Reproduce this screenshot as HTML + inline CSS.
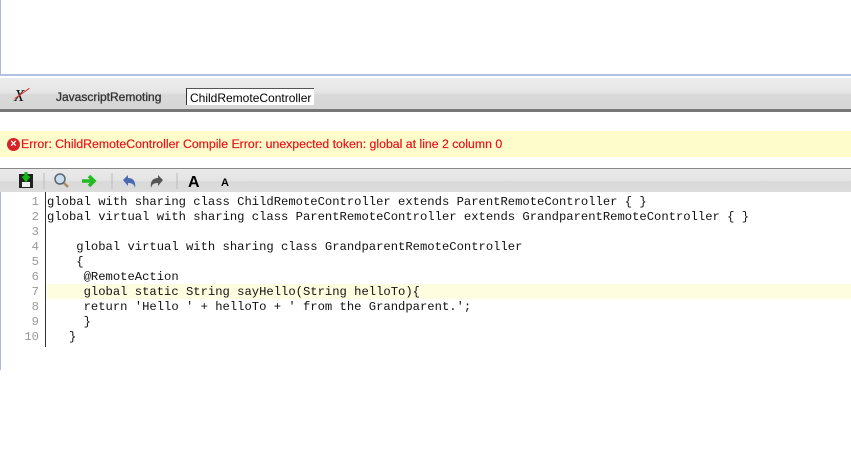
<!DOCTYPE html>
<html><head><style>
body{margin:0;width:851px;height:460px;background:#fff;position:relative;overflow:hidden;font-family:"Liberation Sans",sans-serif}
.abs{position:absolute}
.code{font-family:"Liberation Mono",monospace;font-size:12.2px;line-height:15px;color:#111;white-space:pre}
.ln{font-family:"Liberation Mono",monospace;font-size:12.2px;line-height:15px;color:#999;text-align:right;width:39px;white-space:pre}
</style></head><body>
<div class="abs" style="left:0;top:0;width:1px;height:76px;background:#a9bcdc"></div>
<div class="abs" style="left:0;top:74px;width:851px;height:2px;background:#b0c2e0"></div>
<div class="abs" style="left:0;top:78px;width:851px;height:31px;background:linear-gradient(#ececec 0,#e6e6e6 45%,#d9d9d9 55%,#d6d6d6)"></div>
<div class="abs" style="left:0;top:109px;width:851px;height:3px;background:#777"></div>
<div class="abs" style="left:14px;top:86px;font-family:'Liberation Serif',serif;font-size:17px;font-style:italic;color:#111">X</div>
<div class="abs" style="left:13px;top:93px;width:18px;height:1px;background:#d33;transform:rotate(-35deg)"></div>
<div class="abs" style="left:56px;top:90px;font-size:12px;color:#333;-webkit-text-stroke:0.3px #333">JavascriptRemoting</div>
<div class="abs" style="left:186px;top:88px;width:128px;height:17px;background:#fff;border-left:1px solid #333;border-top:1px solid #555;box-sizing:border-box;font-size:12px;padding:2px 0 0 3px;color:#000">ChildRemoteController</div>
<div class="abs" style="left:0;top:131px;width:851px;height:26px;background:#fffccc"></div>
<div class="abs" style="left:7px;top:138px;width:13px;height:13px;border-radius:50%;background:#d8222a;color:#fff;font-size:11px;font-weight:bold;text-align:center;line-height:13px">×</div>
<div class="abs" style="left:21px;top:137px;font-size:12.3px;color:#e8141c;-webkit-text-stroke:0.2px #e8141c">Error: ChildRemoteController Compile Error: unexpected token: global at line 2 column 0</div>
<div class="abs" style="left:0;top:168px;width:851px;height:24px;background:linear-gradient(#eaeaea,#e4e4e4 50%,#d9d9d9 55%,#dcdcdc);border-top:1px solid #888;box-sizing:border-box"></div>
<svg class="abs" style="left:17px;top:171px" width="220" height="20">
<rect x="2" y="3" width="14" height="14" fill="#222"/><rect x="5" y="11" width="8" height="5" fill="#eee"/><path d="M9 1v6M6 5l3 4 3-4" stroke="#1b1" stroke-width="3" fill="none"/>
<line x1="27" y1="2" x2="27" y2="18" stroke="#bbb"/>
<circle cx="43" cy="8" r="5" fill="#cde" stroke="#567" stroke-width="1.5"/><line x1="47" y1="12" x2="51" y2="16" stroke="#a86" stroke-width="2.5"/>
<path d="M65 10h10M72 5l5 5-5 5" stroke="#2b2" stroke-width="3.5" fill="none"/>
<line x1="95" y1="2" x2="95" y2="18" stroke="#bbb"/>
<path d="M106 9l5-5v3c5 0 8 3 7 10-1-4-3-5-7-5v3z" fill="#4a6ab0"/>
<path d="M146 9l-5-5v3c-5 0-8 3-7 10 1-4 3-5 7-5v3z" fill="#555"/>
<line x1="160" y1="2" x2="160" y2="18" stroke="#bbb"/>
<text x="171" y="16" font-family="Liberation Sans" font-weight="bold" font-size="16">A</text>
<text x="204" y="15" font-family="Liberation Sans" font-weight="bold" font-size="11">A</text>
</svg>
<div class="abs" style="left:0;top:192px;width:1px;height:178px;background:#a9bcdc"></div>
<div class="abs" style="left:45px;top:192px;width:1px;height:155px;background:#333"></div>
<div class="abs" style="left:47px;top:284px;width:804px;height:15px;background:#fffde0"></div>
<div class="abs ln" style="left:0;top:195px">1
2
3
4
5
6
7
8
9
10</div>
<div class="abs code" style="left:47px;top:195px">global with sharing class ChildRemoteController extends ParentRemoteController { }
global virtual with sharing class ParentRemoteController extends GrandparentRemoteController { }

    global virtual with sharing class GrandparentRemoteController
    {
     @RemoteAction
     global static String sayHello(String helloTo){
     return 'Hello ' + helloTo + ' from the Grandparent.';
     }
   }</div>
</body></html>
